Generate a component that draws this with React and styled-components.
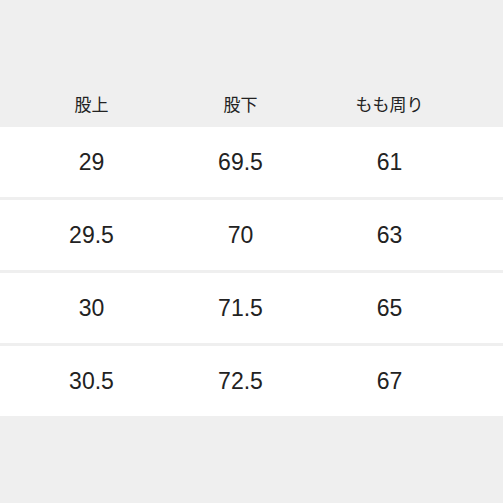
import React from 'react';
import styled, { createGlobalStyle } from 'styled-components';

const GlobalStyle = createGlobalStyle`
    html, body {
        margin: 0;
        padding: 0;
        background: #efefef;
    }
`;

const Page = styled.div`
    width: 503px;
    height: 503px;
    background: #efefef;
    padding-top: 80px;
    box-sizing: border-box;
    font-family: 'Liberation Sans', 'Noto Sans CJK JP', sans-serif;
    color: #222;
`;

const Row = styled.div`
    display: grid;
    grid-template-columns: repeat(3, 149px);
    padding-left: 17px;
    align-items: center;
    height: ${(p) => (p.head ? '47px' : '70px')};
    background: ${(p) => (p.head ? 'transparent' : '#ffffff')};
    margin-bottom: ${(p) => (p.head ? '0' : '3px')};
`;

const Cell = styled.span`
    text-align: center;
    font-size: ${(p) => (p.head ? '17px' : '23px')};
    font-family: ${(p) =>
        p.head ? "'Noto Sans CJK JP', sans-serif" : "'Liberation Sans', sans-serif"};
    color: #222;
    line-height: 1;
`;

const sizes = [
    ['29', '69.5', '61'],
    ['29.5', '70', '63'],
    ['30', '71.5', '65'],
    ['30.5', '72.5', '67'],
];

const App = () => (
    <>
        <GlobalStyle />
        <Page>
            <Row head>
                <Cell head>股上</Cell>
                <Cell head>股下</Cell>
                <Cell head>もも周り</Cell>
            </Row>
            {sizes.map((row) => (
                <Row key={row[0]}>
                    {row.map((v, i) => (
                        <Cell key={i}>{v}</Cell>
                    ))}
                </Row>
            ))}
        </Page>
    </>
);

export default App;
